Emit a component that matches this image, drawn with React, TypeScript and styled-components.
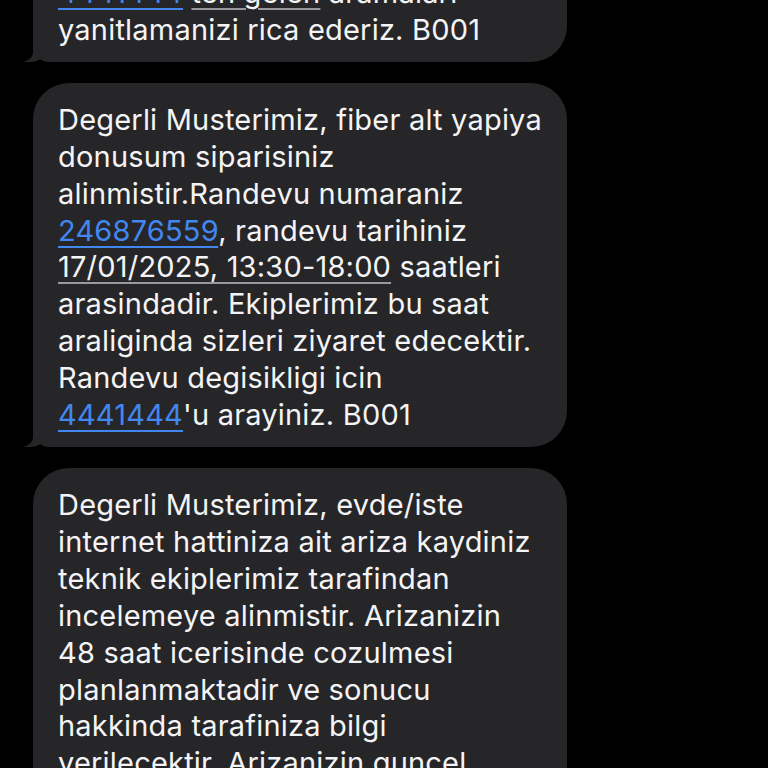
import React, { FC } from 'react'
import styled, { createGlobalStyle } from 'styled-components'

type Part = { text: string, kind?: 'link' | 'under' }
type Line = Part[]

const t = (text: string): Part => ({ text })
const link = (text: string): Part => ({ text, kind: 'link' })
const under = (text: string): Part => ({ text, kind: 'under' })

const messages: Line[][] = [
  [
    [link('4441444'), t(' '), under('ten gelen'), t(' aramalari')],
    [t('yanitlamanizi rica ederiz. B001')],
  ],
  [
    [t('Degerli Musterimiz, fiber alt yapiya')],
    [t('donusum siparisiniz')],
    [t('alinmistir.Randevu numaraniz')],
    [link('246876559'), t(', randevu tarihiniz')],
    [under('17/01/2025, 13:30-18:00'), t(' saatleri')],
    [t('arasindadir. Ekiplerimiz bu saat')],
    [t('araliginda sizleri ziyaret edecektir.')],
    [t('Randevu degisikligi icin')],
    [link('4441444'), t("'u arayiniz. B001")],
  ],
  [
    [t('Degerli Musterimiz, evde/iste')],
    [t('internet hattiniza ait ariza kaydiniz')],
    [t('teknik ekiplerimiz tarafindan')],
    [t('incelemeye alinmistir. Arizanizin')],
    [t('48 saat icerisinde cozulmesi')],
    [t('planlanmaktadir ve sonucu')],
    [t('hakkinda tarafiniza bilgi')],
    [t('verilecektir. Arizanizin guncel')],
    [t('durumunu ogrenmek icin')],
  ],
]

const App: FC = () => {
  return (
    <>
      <GlobalStyle />
      <Screen>
        <Thread>
          {messages.map((lines, i) => (
            <Bubble key={i} $tail={i < messages.length - 1}>
              {lines.map((line, j) => (
                <TextLine key={j}>
                  {line.map((part, k) =>
                    part.kind === 'link' ? (
                      <Link key={k}>{part.text}</Link>
                    ) : part.kind === 'under' ? (
                      <Underlined key={k}>{part.text}</Underlined>
                    ) : (
                      <span key={k}>{part.text}</span>
                    )
                  )}
                </TextLine>
              ))}
            </Bubble>
          ))}
        </Thread>
      </Screen>
    </>
  )
}

const GlobalStyle = createGlobalStyle`
  html, body {
    margin: 0;
    padding: 0;
    background: #000;
  }
`

const Screen = styled.div`
  width: 768px;
  height: 768px;
  overflow: hidden;
  background: #000;
`

const Thread = styled.div`
  display: flex;
  flex-direction: column;
  gap: 21px;
  padding-left: 33px;
  margin-top: -44px;
`

const Bubble = styled.div<{ $tail: boolean }>`
  position: relative;
  width: 534px;
  box-sizing: border-box;
  padding: 19px 20px 13px 25px;
  background: #262628;
  border-radius: 36px;
  ${p => p.$tail && `border-bottom-left-radius: 16px;`}

  &::before {
    content: "";
    display: ${p => (p.$tail ? 'block' : 'none')};
    position: absolute;
    bottom: 0;
    left: -9px;
    width: 24px;
    height: 22px;
    background: #262628;
    border-bottom-right-radius: 18px 16px;
  }
  &::after {
    content: "";
    display: ${p => (p.$tail ? 'block' : 'none')};
    position: absolute;
    bottom: 0;
    left: -12px;
    width: 12px;
    height: 24px;
    background: #000;
    border-bottom-right-radius: 12px 10px;
  }
`

const TextLine = styled.div`
  font-family: Inter, "Liberation Sans", sans-serif;
  font-size: 29px;
  line-height: 36.9px;
  color: #f4f4f6;
  white-space: nowrap;
  letter-spacing: 0.2px;
`

const Link = styled.span`
  color: #4287f0;
  text-decoration: underline;
  text-decoration-thickness: 2px;
  text-underline-offset: 5px;
`

const Underlined = styled.span`
  text-decoration: underline;
  text-decoration-color: #9a9a9e;
  text-decoration-thickness: 2px;
  text-underline-offset: 5px;
`

export default App
